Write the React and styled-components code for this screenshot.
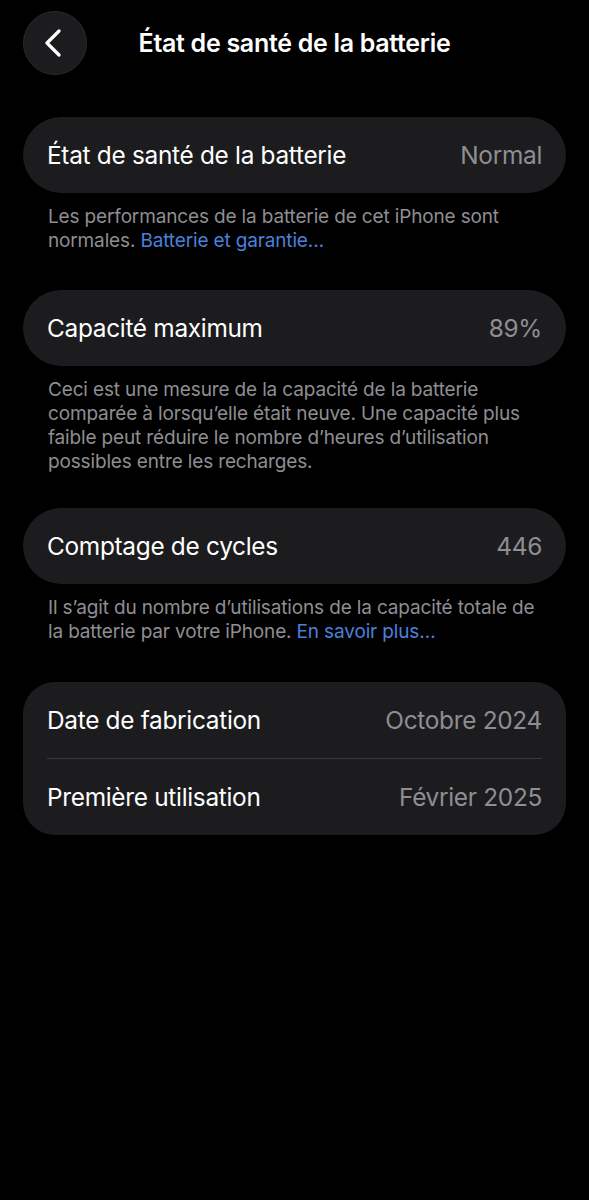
import React from "react";
import styled, { createGlobalStyle } from "styled-components";

const GlobalStyle = createGlobalStyle`
  html, body {
    margin: 0;
    padding: 0;
    background: #000;
  }
  body {
    font-family: Inter, "Noto Sans", "Liberation Sans", sans-serif;
    -webkit-font-smoothing: antialiased;
  }
`;

const Screen = styled.div`
  width: 589px;
  min-height: 1200px;
  background: #000;
  color: #fff;
  box-sizing: border-box;
  padding: 11px 23px 0;
`;

const Header = styled.header`
  height: 64px;
  display: flex;
  align-items: center;
`;

const BackButton = styled.button`
  flex: none;
  width: 64px;
  height: 64px;
  border-radius: 50%;
  background: #1c1c1e;
  border: 1px solid #2a2a2c;
  display: flex;
  align-items: center;
  justify-content: center;
  padding: 0 4px 0 0;
  box-sizing: border-box;
  cursor: pointer;
`;

const Title = styled.h1`
  flex: 1;
  margin: 0 64px 0 0;
  text-align: center;
  font-size: 25px;
  font-weight: 600;
  letter-spacing: -0.3px;
  color: #fff;
`;

const Card = styled.div`
  background: #1c1c1e;
  border-radius: ${p => (p.$tall ? "32px" : "38px")};
  padding: 0 24px ${p => (p.$tall ? "1px" : "0")};
  margin-top: ${p => p.$top}px;
`;

const Row = styled.div`
  height: 76px;
  display: flex;
  align-items: center;
  justify-content: space-between;
  font-size: 24.4px;
  letter-spacing: -0.3px;
  border-top: ${p => (p.$divided ? "1px solid #38383a" : "none")};
  box-sizing: border-box;
`;

const Label = styled.span`
  color: #fff;
`;

const Value = styled.span`
  color: #8e8e93;
`;

const Footnote = styled.p`
  margin: 12px 0 0;
  padding: 0 25px;
  font-size: 19px;
  line-height: 24px;
  color: #8e8e93;
  letter-spacing: -0.15px;
`;

const Link = styled.a`
  color: #4a80dc;
  text-decoration: none;
`;

const Chevron = () => (
  <svg width="18" height="28" viewBox="0 0 18 28" fill="none">
    <path
      d="M15 2 L3 14 L15 26"
      stroke="#fff"
      strokeWidth="3.2"
      strokeLinecap="round"
      strokeLinejoin="round"
    />
  </svg>
);

export default function App() {
  return (
    <>
      <GlobalStyle />
      <Screen>
        <Header>
          <BackButton aria-label="Retour">
            <Chevron />
          </BackButton>
          <Title>État de santé de la batterie</Title>
        </Header>

        <Card $top={42}>
          <Row>
            <Label>État de santé de la batterie</Label>
            <Value>Normal</Value>
          </Row>
        </Card>
        <Footnote>
          Les performances de la batterie de cet iPhone sont normales.{" "}
          <Link href="#">Batterie et garantie…</Link>
        </Footnote>

        <Card $top={37}>
          <Row>
            <Label>Capacité maximum</Label>
            <Value>89%</Value>
          </Row>
        </Card>
        <Footnote>
          Ceci est une mesure de la capacité de la batterie comparée à
          lorsqu’elle était neuve. Une capacité plus faible peut réduire le
          nombre d’heures d’utilisation possibles entre les recharges.
        </Footnote>

        <Card $top={34}>
          <Row>
            <Label>Comptage de cycles</Label>
            <Value>446</Value>
          </Row>
        </Card>
        <Footnote>
          Il s’agit du nombre d’utilisations de la capacité totale de la
          batterie par votre iPhone. <Link href="#">En savoir plus…</Link>
        </Footnote>

        <Card $top={38} $tall>
          <Row>
            <Label>Date de fabrication</Label>
            <Value>Octobre 2024</Value>
          </Row>
          <Row $divided>
            <Label>Première utilisation</Label>
            <Value>Février 2025</Value>
          </Row>
        </Card>
      </Screen>
    </>
  );
}
